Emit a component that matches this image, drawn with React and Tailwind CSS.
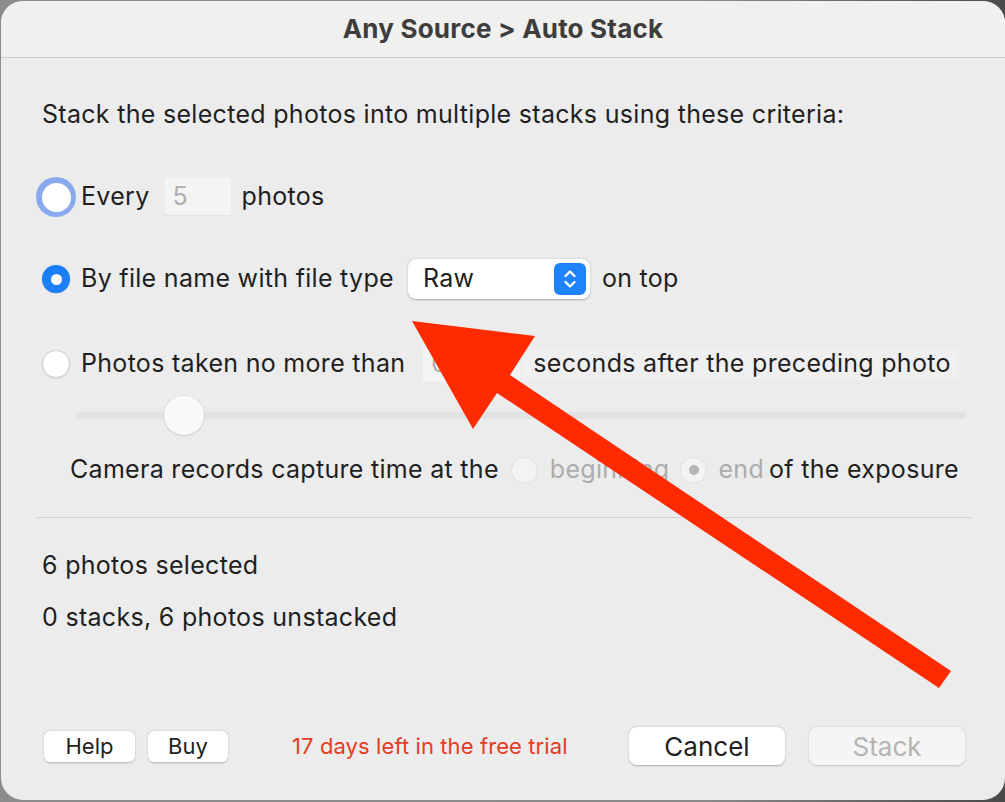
import React from "react";

const F = { fontFamily: "Inter, 'Noto Sans', sans-serif" };

function Radio({ checked, focus }) {
  if (focus) {
    return (
      <div className="w-[40px] h-[40px] rounded-full bg-[#8aa9ee] flex items-center justify-center -ml-[6px] mr-[-6px]">
        <div className="w-[29px] h-[29px] rounded-full bg-white" />
      </div>
    );
  }
  if (checked) {
    return (
      <div className="w-[28px] h-[28px] rounded-full bg-[#1a7ff8] flex items-center justify-center shadow-[0_0.5px_1px_rgba(0,0,0,0.2)]">
        <div className="w-[11px] h-[11px] rounded-full bg-white" />
      </div>
    );
  }
  return (
    <div className="w-[28px] h-[28px] rounded-full bg-white border border-[#d0d0d0] shadow-[0_0.5px_1px_rgba(0,0,0,0.12)]" />
  );
}

function DisabledRadio({ checked }) {
  return (
    <div className="w-[27px] h-[27px] rounded-full bg-[#f3f3f3] border border-[#dedede] flex items-center justify-center">
      {checked && <div className="w-[10px] h-[10px] rounded-full bg-[#b5b5b5]" />}
    </div>
  );
}

export default function App() {
  return (
    <div className="w-[1005px] h-[802px] bg-[linear-gradient(90deg,#8c8c8c_0%,#8a8a8a_70%,#4a4a4a_100%)] pl-[1px] pt-[1px] pb-[2px] overflow-hidden relative" style={F}>
      <div className="w-full h-full rounded-[22px] bg-[#ececec] overflow-hidden flex flex-col">
        {/* title bar */}
        <div className="h-[57px] shrink-0 bg-[#f0f0ee] border-b border-[#cdcdcd] flex items-center justify-center">
          <span className="text-[26px] font-bold text-[#3d3d3d] tracking-[0.2px] pb-[1px]">Any Source &gt; Auto Stack</span>
        </div>

        <div className="flex flex-col text-[#1f1f1f] text-[25px] tracking-[0.3px] pl-[41px] pr-[33px]">
          <div className="mt-[37px] h-[40px] flex items-center">
            <span>Stack the selected photos into multiple stacks using these criteria:</span>
          </div>

          {/* Every */}
          <div className="mt-[42px] h-[40px] flex items-center">
            <Radio focus />
            <span className="ml-[11px]">Every</span>
            <div className="ml-[15px] w-[66px] h-[38px] bg-[#f4f4f4] border-b border-[#e2e2e2] flex items-center pl-[8px] text-[#b0b0b0]">5</div>
            <span className="ml-[11px]">photos</span>
          </div>

          {/* By file name */}
          <div className="mt-[42px] h-[40px] flex items-center">
            <Radio checked />
            <span className="ml-[11px]">By file name with file type</span>
            <div className="ml-[14px] w-[182px] h-[40px] bg-white rounded-[8px] shadow-[0_0.5px_2px_rgba(0,0,0,0.28)] flex items-center justify-between pl-[15px] pr-[4px]">
              <span>Raw</span>
              <div className="w-[32px] h-[32px] rounded-[6px] bg-[#1f83fb] flex items-center justify-center">
                <svg width="14" height="22" viewBox="0 0 14 22" fill="none" stroke="white" strokeWidth="2.4" strokeLinecap="round" strokeLinejoin="round">
                  <path d="M2.5 8 L7 3.5 L11.5 8" />
                  <path d="M2.5 14 L7 18.5 L11.5 14" />
                </svg>
              </div>
            </div>
            <span className="ml-[12px]">on top</span>
          </div>

          {/* Photos taken */}
          <div className="mt-[45px] h-[40px] flex items-center">
            <Radio />
            <span className="ml-[11px]">Photos taken no more than</span>
            <div className="ml-[18px] w-[97px] h-[34px] bg-[#f4f4f4] flex items-center pl-[8px] text-[#b0b0b0]">0</div>
            <div className="ml-[2px] h-[31px] bg-[#efefef] flex items-center pl-[11px] pr-[7px]">seconds after the preceding photo</div>
          </div>

          {/* slider */}
          <div className="mt-[11px] h-[40px] relative flex items-center ml-[34px] mr-[6px]">
            <div className="w-full h-[7px] rounded-full bg-[#e2e2e2]" />
            <div className="absolute left-[88px] top-[1px] w-[40px] h-[39px] rounded-full bg-[#fafafa] shadow-[0_0.5px_2px_rgba(0,0,0,0.22)]" />
          </div>

          {/* camera row */}
          <div className="mt-[15px] h-[40px] flex items-center pl-[28px]">
            <span>Camera records capture time at the</span>
            <div className="ml-[12px]"><DisabledRadio /></div>
            <span className="ml-[12px] text-[#acacac]">beginning</span>
            <div className="ml-[11px]"><DisabledRadio checked /></div>
            <span className="ml-[11px] text-[#acacac]">end</span>
            <span className="ml-[5px]">of the exposure</span>
          </div>

          <div className="mt-[27px] h-px bg-[#d2d2d2] -ml-[6px] mr-0" />

          <div className="mt-[28px] h-[40px] flex items-center">6 photos selected</div>
          <div className="mt-[12px] h-[40px] flex items-center">0 stacks, 6 photos unstacked</div>

          {/* footer */}
          <div className="mt-[88px] h-[40px] flex items-center tracking-normal">
            <button className="ml-[2px] w-[91px] h-[31px] bg-white rounded-[6px] shadow-[0_0.5px_2px_rgba(0,0,0,0.25)] text-[22px] text-[#222] flex items-center justify-center">Help</button>
            <button className="ml-[13px] w-[80px] h-[31px] bg-white rounded-[6px] shadow-[0_0.5px_2px_rgba(0,0,0,0.25)] text-[22px] text-[#222] flex items-center justify-center">Buy</button>
            <span className="ml-[64px] text-[22px] tracking-[0.1px] text-[#e63b22]">17 days left in the free trial</span>
            <div className="flex-1" />
            <button className="w-[156px] h-[38px] bg-white rounded-[8px] shadow-[0_0.5px_2px_rgba(0,0,0,0.28)] text-[26px] text-[#1f1f1f] flex items-center justify-center">Cancel</button>
            <button className="ml-[24px] mr-[7px] w-[156px] h-[38px] bg-[#f5f5f5] rounded-[8px] shadow-[0_0.5px_2px_rgba(0,0,0,0.18)] text-[26px] text-[#b4b4b4] flex items-center justify-center">Stack</button>
          </div>
        </div>
      </div>

      {/* red arrow overlay */}
      <svg className="absolute left-0 top-0 pointer-events-none" width="1005" height="802" viewBox="0 0 1005 802">
        <polygon points="412,321 535,336 510,375 951,671 939,688 497,393 473,429" fill="#ff2a00" />
      </svg>
    </div>
  );
}
